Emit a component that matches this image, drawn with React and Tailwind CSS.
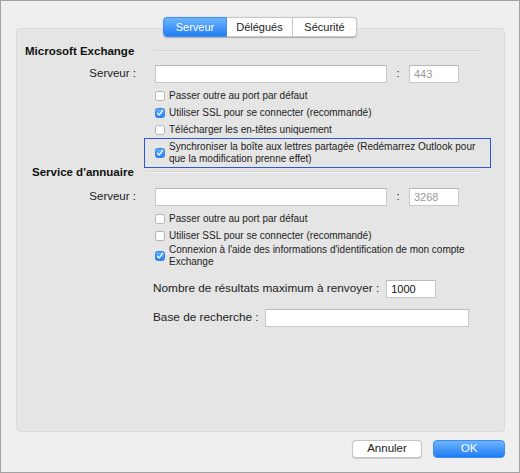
import React from "react";

const font = { fontFamily: '"Liberation Sans", Arial, Helvetica, sans-serif' };

function Check({ checked }) {
  if (checked) {
    return (
      <span className="flex h-[10px] w-[10px] shrink-0 items-center justify-center rounded-[2.5px] border border-[#2a7de8] bg-gradient-to-b from-[#6ab1fb] to-[#2580f2]">
        <svg width="8" height="8" viewBox="0 0 8 8">
          <path d="M1.6 4.2 L3.3 6 L6.4 1.6" fill="none" stroke="#fff" strokeWidth="1.3" strokeLinecap="round" strokeLinejoin="round" />
        </svg>
      </span>
    );
  }
  return <span className="h-[10px] w-[10px] shrink-0 rounded-[2.5px] border border-[#b3b3b3] bg-white" />;
}

function CheckRow({ checked, children }) {
  return (
    <div className="flex h-[17px] items-center pl-[138px]">
      <Check checked={checked} />
      <span className="ml-[4px] text-[10px] leading-[12px] text-[#1c1c1c]">{children}</span>
    </div>
  );
}

function Field({ className, children, muted }) {
  return (
    <div
      className={
        "flex h-[18px] items-center border border-[#c8c8c8] border-t-[#b9b9b9] bg-white pl-[4px] text-[11px] " +
        (muted ? "text-[#9a9a9a] " : "text-[#111] ") +
        className
      }
    >
      {children}
    </div>
  );
}

function ServerRow({ port }) {
  return (
    <div className="flex h-[18px] items-center">
      <span className="w-[119px] text-right text-[11.5px] text-[#1c1c1c]">Serveur :</span>
      <Field className="ml-[19px] w-[232px]" />
      <span className="w-[22px] text-center text-[11.5px] text-[#1c1c1c]">:</span>
      <Field className="w-[50px]" muted>
        {port}
      </Field>
    </div>
  );
}

function Heading({ children, pad, gap }) {
  return (
    <div className={"flex h-[14px] items-center pr-[23px] " + pad}>
      <span className="text-[11.5px] font-bold leading-[14px] text-[#111]">{children}</span>
      <div className={"h-[2px] flex-1 border-t border-[#d3d3d3] border-b-[#f2f2f2] border-b " + gap} />
    </div>
  );
}

export default function App() {
  return (
    <div
      style={font}
      className="flex h-[473px] w-[520px] flex-col border border-[#a2a2a2] bg-[#efefef] pt-[16px] text-[#1c1c1c]"
    >
      {/* tab strip */}
      <div className="relative z-10 flex h-[20px] justify-center">
        <div className="flex rounded-[4px] shadow-[0_0.5px_1px_rgba(0,0,0,0.25)]">
          <div className="flex w-[64px] items-center justify-center rounded-l-[4px] border border-[#3b8ef5] bg-gradient-to-b from-[#6db5fb] to-[#1f7ef4] text-[11px] text-white">
            Serveur
          </div>
          <div className="flex w-[66px] items-center justify-center border-y border-r border-[#c6c6c6] bg-white text-[11px] text-[#1a1a1a]">
            Délégués
          </div>
          <div className="flex w-[64px] items-center justify-center rounded-r-[4px] border-y border-r border-[#c6c6c6] bg-white text-[11px] text-[#1a1a1a]">
            Sécurité
          </div>
        </div>
      </div>

      {/* settings panel */}
      <div className="-mt-[9px] ml-[15px] flex h-[404px] w-[489px] flex-col rounded-[4px] border border-[#dadada] bg-[#e5e5e5] pt-[15px]">
        <Heading pad="pl-[8px]" gap="ml-[19px]">Microsoft Exchange</Heading>

        <div className="mt-[7px]">
          <ServerRow port="443" />
        </div>

        <div className="mt-[4px] flex flex-col">
          <CheckRow>Passer outre au port par défaut</CheckRow>
          <CheckRow checked>Utiliser SSL pour se connecter (recommandé)</CheckRow>
          <CheckRow>Télécharger les en-têtes uniquement</CheckRow>
        </div>

        <div className="ml-[127px] flex h-[30px] w-[347px] items-center border border-[#2f56d6] pl-[10px]">
          <Check checked />
          <span className="ml-[4px] text-[10px] leading-[12px] text-[#1c1c1c]">
            Synchroniser la boîte aux lettres partagée (Redémarrez Outlook pour
            <br />
            que la modification prenne effet)
          </span>
        </div>

        <div className="-mt-[3px]">
          <Heading pad="pl-[15px]" gap="ml-[12px]">Service d'annuaire</Heading>
        </div>

        <div className="mt-[9px]">
          <ServerRow port="3268" />
        </div>

        <div className="mt-[4px] flex flex-col">
          <CheckRow>Passer outre au port par défaut</CheckRow>
          <CheckRow>Utiliser SSL pour se connecter (recommandé)</CheckRow>
          <div className="flex h-[24px] items-center pl-[138px]">
            <Check checked />
            <span className="ml-[4px] text-[10px] leading-[12px] text-[#1c1c1c]">
              Connexion à l'aide des informations d'identification de mon compte
              <br />
              Exchange
            </span>
          </div>
        </div>

        <div className="mt-[12px] flex h-[18px] items-center pl-[136px]">
          <span className="text-[11.8px] text-[#1c1c1c]">Nombre de résultats maximum à renvoyer :</span>
          <Field className="ml-[7px] w-[50px]">1000</Field>
        </div>

        <div className="mt-[11px] flex h-[18px] items-center pl-[136px]">
          <span className="text-[11.8px] text-[#1c1c1c]">Base de recherche :</span>
          <Field className="ml-[6px] w-[204px]" />
        </div>
      </div>

      {/* dialog buttons */}
      <div className="mt-[8px] flex justify-end gap-[11px] pr-[14px]">
        <button className="flex h-[18px] w-[70px] items-center justify-center rounded-[4px] border border-[#c4c4c4] bg-white text-[11.5px] text-[#1a1a1a] shadow-[0_0.5px_1px_rgba(0,0,0,0.15)]">
          Annuler
        </button>
        <button className="flex h-[18px] w-[72px] items-center justify-center rounded-[4px] border border-[#3a8cf4] bg-gradient-to-b from-[#6cb4fb] to-[#1b7cf4] text-[11.5px] text-white">
          OK
        </button>
      </div>
    </div>
  );
}
